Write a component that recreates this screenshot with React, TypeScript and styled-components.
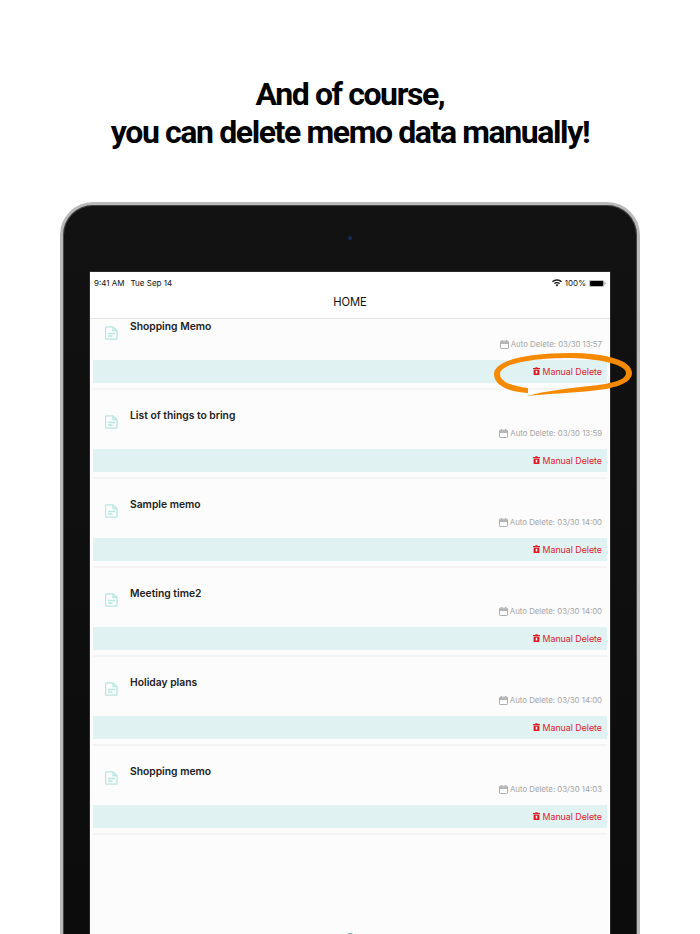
import React from 'react'
import styled, { createGlobalStyle } from 'styled-components'

interface IMemo {
  id: number,
  title: string,
  deleteAt: string,
}

const memoList: IMemo[] = [
  { id: 1, title: 'Shopping Memo', deleteAt: '03/30 13:57' },
  { id: 2, title: 'List of things to bring', deleteAt: '03/30 13:59' },
  { id: 3, title: 'Sample memo', deleteAt: '03/30 14:00' },
  { id: 4, title: 'Meeting time2', deleteAt: '03/30 14:00' },
  { id: 5, title: 'Holiday plans', deleteAt: '03/30 14:00' },
  { id: 6, title: 'Shopping memo', deleteAt: '03/30 14:03' },
]

const GlobalStyle = createGlobalStyle`
  html, body {
    margin: 0;
    padding: 0;
    background: #ffffff;
  }
  * {
    box-sizing: border-box;
  }
`

const Page = styled.div`
  width: 700px;
  height: 934px;
  overflow: hidden;
  display: flex;
  flex-direction: column;
  align-items: center;
  background: #ffffff;
  font-family: Inter, "Noto Sans", sans-serif;
`

const Headline = styled.h1`
  margin: 75px 0 0;
  font-family: Roboto, "Liberation Sans", sans-serif;
  font-size: 32px;
  line-height: 38px;
  font-weight: 700;
  letter-spacing: -1.4px;
  text-align: center;
  color: #000000;
`

const Device = styled.div`
  position: relative;
  flex: none;
  width: 580px;
  height: 800px;
  margin-top: 51px;
  padding: 67px 27px 0;
  border: 3px solid #b9b9b9;
  border-bottom: 0;
  border-radius: 33px 33px 0 0;
  background: linear-gradient(#121212, #0b0b0b);
  box-shadow: inset 0 0 0 1px #444444;
`

const Camera = styled.div`
  position: absolute;
  top: 31px;
  left: 50%;
  width: 4px;
  height: 4px;
  margin-left: -2px;
  border-radius: 50%;
  background: #1b2a55;
  box-shadow: 0 0 3px #151c30;
`

const Screen = styled.div`
  height: 100%;
  background: #fcfcfc;
  box-shadow: 0 0 0 1px #2a2a2a;
`

const StatusBar = styled.div`
  display: flex;
  align-items: center;
  justify-content: space-between;
  height: 22px;
  padding: 0 4px;
  background: #ffffff;
  font-size: 8px;
  color: #111111;
`

const StatusGroup = styled.div`
  display: flex;
  align-items: center;
  gap: 6px;
`

const StatusRight = styled(StatusGroup)`
  gap: 3px;
`

const NavBar = styled.div`
  display: flex;
  align-items: center;
  justify-content: center;
  height: 25px;
  padding-bottom: 9px;
  background: #ffffff;
  border-bottom: 1px solid #e6e6e6;
  font-size: 11.2px;
  color: #111111;
`

const List = styled.div`
  padding: 0 3px;
`

const Row = styled.div`
  height: 89px;
  padding-top: 18px;
  border-bottom: 2px solid #f4f4f4;

  &:first-child {
    height: 71px;
    padding-top: 0;
  }
`

const Main = styled.div`
  display: flex;
  height: 41px;
`

const IconCell = styled.div`
  width: 37px;
  padding: 5px 0 0 12px;
`

const Body = styled.div`
  flex: 1;
  padding-right: 5px;
`

const Title = styled.div`
  font-size: 10.3px;
  line-height: 14px;
  font-weight: 600;
  color: #222222;
`

const AutoDelete = styled.div`
  display: flex;
  align-items: center;
  justify-content: flex-end;
  gap: 2px;
  margin-top: 5px;
  font-size: 7.8px;
  line-height: 12px;
  color: #a4a4a4;
`

const ActionBand = styled.div`
  display: flex;
  align-items: center;
  justify-content: flex-end;
  gap: 3px;
  height: 23px;
  padding: 0 5px 1px 0;
  background: #e0f2f1;
  font-size: 8.8px;
  color: #e02030;
`

const Scribble = styled.svg`
  position: absolute;
  top: 148px;
  left: 428px;
  width: 144px;
  height: 44px;
  overflow: visible;
`

const TabDot = styled.div`
  position: absolute;
  top: 728px;
  left: 50%;
  width: 10px;
  height: 10px;
  margin-left: -5px;
  border-radius: 50%;
  background: #5cb8aa;
`

const DocIcon = () => (
  <svg width="13" height="14" viewBox="0 0 13 14" fill="none" stroke="#b5e6e0" strokeWidth="1.3">
    <path d="M1.500 .8h6.500l4 3.800v7.600a1 1 0 0 1-1 1h-9.500a1 1 0 0 1-1-1v-10.400a1 1 0 0 1 1-1z" />
    <path d="M8 1v3.500h3.500" />
    <path d="M3 7.500h7M3 10h4.500" />
  </svg>
)

const CalendarIcon = () => (
  <svg width="9" height="9" viewBox="0 0 9 9" fill="none" stroke="#a4a4a4" strokeWidth="0.9">
    <rect x="0.500" y="1.200" width="8" height="7.300" rx="0.800" />
    <path d="M0.500 2.400h8M0.500 3.400h8M2.400 0v1.600M6.600 0v1.600" />
  </svg>
)

const TrashIcon = () => (
  <svg width="7" height="8" viewBox="0 0 7 8" fill="#e01a24">
    <path d="M0 1h2.200l.4-.7h1.800l.4.7H7v1H0z" />
    <path d="M.6 2.400h5.800v5a.6.6 0 0 1-.6.6H1.200a.6.6 0 0 1-.6-.6zM2.700 3.800v2.600h1.600v-2.600z" fillRule="evenodd" />
  </svg>
)

const WifiIcon = () => (
  <svg width="10" height="8" viewBox="0 0 11 8" fill="#111111">
    <path d="M5.500 0C3.400 0 1.500.8 0 2.200l1 1C2.200 2.100 3.800 1.400 5.500 1.400S8.800 2.100 10 3.200l1-1C9.500.8 7.600 0 5.500 0z" />
    <path d="M5.500 2.800c-1.300 0-2.500.5-3.400 1.400l1 1c.6-.6 1.500-1 2.400-1s1.800.4 2.400 1l1-1c-.9-.9-2.100-1.400-3.400-1.400z" />
    <path d="M5.500 5.400c-.7 0-1.200.3-1.600.7l1.600 1.700 1.600-1.700c-.4-.4-.9-.7-1.600-.7z" />
  </svg>
)

const BatteryIcon = () => (
  <svg width="17" height="7" viewBox="0 0 17 7">
    <rect x="0.300" y="0.300" width="14.600" height="6.400" rx="1.600" fill="none" stroke="#777777" strokeWidth="0.6" />
    <rect x="1" y="1" width="13.200" height="5" rx="1" fill="#000000" />
    <path d="M15.600 2.300c.6.200 1 .7 1 1.200s-.4 1-1 1.200z" fill="#888888" />
  </svg>
)

export default function App() {
  return (
    <Page>
      <GlobalStyle />
      <Headline>
        And of course,
        <br />
        you can delete memo data manually!
      </Headline>
      <Device>
        <Camera />
        <Screen>
          <StatusBar>
            <StatusGroup>
              <span>9:41 AM</span>
              <span>Tue Sep 14</span>
            </StatusGroup>
            <StatusRight>
              <WifiIcon />
              <span>100%</span>
              <BatteryIcon />
            </StatusRight>
          </StatusBar>
          <NavBar>HOME</NavBar>
          <List>
            {memoList.map((memo) => (
              <Row key={memo.id}>
                <Main>
                  <IconCell>
                    <DocIcon />
                  </IconCell>
                  <Body>
                    <Title>{memo.title}</Title>
                    <AutoDelete>
                      <CalendarIcon />
                      Auto Delete: {memo.deleteAt}
                    </AutoDelete>
                  </Body>
                </Main>
                <ActionBand>
                  <TrashIcon />
                  Manual Delete
                </ActionBand>
              </Row>
            ))}
          </List>
        </Screen>
        <TabDot />
        <Scribble viewBox="0 0 144 44">
          <path
            d="M37 40C19 39 3 33 3 21C3 8 34 0 79 0C114 0 141 7 141 20C141 31 121 36 99 38C79 40 54 41 36 43C54 38 79 35 99 33C117 31 135 28 135 20C135 12 112 6 79 5C40 5 9 11 9 21C9 29 21 33 37 35Z"
            fill="#f58a00"
          />
        </Scribble>
      </Device>
    </Page>
  )
}
